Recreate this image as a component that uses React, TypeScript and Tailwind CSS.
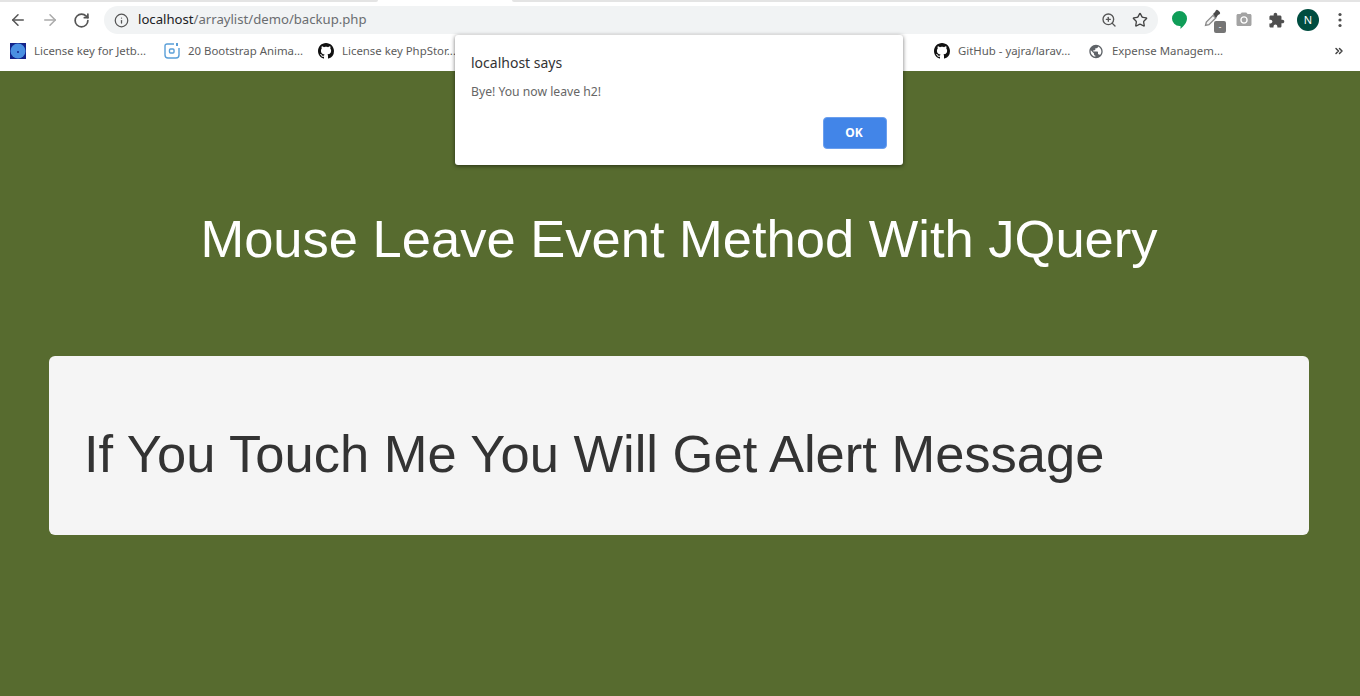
import type { ReactNode } from "react";
import { ArrowLeft, ArrowRight, RotateCw, Info, ZoomIn, Star, ChevronsRight } from "lucide-react";

const Github = () => (
  <svg viewBox="0 0 16 16" width="16" height="16" fill="#111">
    <path d="M8 0C3.58 0 0 3.58 0 8c0 3.54 2.29 6.53 5.47 7.59.4.07.55-.17.55-.38 0-.19-.01-.82-.01-1.49-2.01.37-2.53-.49-2.69-.94-.09-.23-.48-.94-.82-1.13-.28-.15-.68-.52-.01-.53.63-.01 1.08.58 1.23.82.72 1.21 1.87.87 2.33.66.07-.52.28-.87.51-1.07-1.78-.2-3.64-.89-3.64-3.95 0-.87.31-1.59.82-2.15-.08-.2-.36-1.02.08-2.12 0 0 .67-.21 2.2.82.64-.18 1.32-.27 2-.27s1.36.09 2 .27c1.53-1.04 2.2-.82 2.2-.82.44 1.1.16 1.92.08 2.12.51.56.82 1.27.82 2.15 0 3.07-1.87 3.75-3.65 3.95.29.25.54.73.54 1.48 0 1.07-.01 1.93-.01 2.2 0 .21.15.46.55.38A8.01 8.01 0 0 0 16 8c0-4.42-3.58-8-8-8z" />
  </svg>
);

const Jet = () => (
  <svg viewBox="0 0 16 16" width="16" height="16">
    <rect width="16" height="16" fill="#14248a" />
    <circle cx="8" cy="8" r="7.5" fill="#4a90e2" />
    <circle cx="8" cy="9" r="1" fill="#14248a" />
  </svg>
);

const Boot = () => (
  <svg viewBox="0 0 16 16" width="16" height="16" fill="none" stroke="#5a9fd8" strokeWidth="1.4">
    <path d="M10 1H3a2 2 0 0 0-2 2v9a3 3 0 0 0 3 3h8a3 3 0 0 0 3-3V5" />
    <rect x="5.500" y="6" width="4.500" height="4" rx="1" />
    <path d="M13 0v3" strokeWidth="2" />
  </svg>
);

const Globe = () => (
  <svg viewBox="0 0 24 24" width="17" height="17" fill="#5f6368">
    <path d="M12 2C6.48 2 2 6.48 2 12s4.48 10 10 10 10-4.48 10-10S17.52 2 12 2zm-1 17.930c-3.950-.49-7-3.850-7-7.930 0-.62.08-1.210.21-1.790L9 15v1c0 1.100.9 2 2 2v1.930zm6.900-2.540c-.26-.81-1-1.390-1.900-1.390h-1v-3c0-.55-.45-1-1-1H8v-2h2c.55 0 1-.45 1-1V7h2c1.100 0 2-.9 2-2v-.410c2.930 1.190 5 4.060 5 7.410 0 2.080-.8 3.970-2.100 5.390z" />
  </svg>
);

const Bubble = () => (
  <svg viewBox="0 0 15 18" width="15" height="18" className="shrink-0">
    <path d="M7.500 0a7.500 7.500 0 0 1 7.500 7.500c0 4.500-3.500 7.500-6.500 10.500v-3.050a7.500 7.500 0 0 1-1 .05A7.500 7.500 0 0 1 0 7.500 7.500 7.500 0 0 1 7.500 0z" fill="#0f9d58" />
  </svg>
);

const Dropper = () => (
  <span className="relative w-[20px] h-[26px] shrink-0 ml-[17px] -mt-[2px]">
    <svg viewBox="0 0 18 18" width="18" height="18" className="absolute left-0 top-[3px]">
      <path d="M1.500 16.500l.8-3.500 6.700-6.700 2.700 2.700-6.700 6.700z" fill="#f2f2f2" stroke="#8a8a8a" strokeWidth="1.300" />
      <path d="M9 5l2-2 .8-1.500a1.600 1.600 0 0 1 2.200-.2l1.800 1.800a1.600 1.600 0 0 1-.3 2.200L14 6l-2 3z" fill="#4a4a4a" />
    </svg>
    <span className="absolute left-[10px] top-[15px] w-[12px] h-[12px] rounded-[2px] bg-[#757575] text-white text-[8px] leading-[12px] text-center">-</span>
  </span>
);

const CameraIcon = () => (
  <svg viewBox="0 0 24 24" width="18" height="18" fill="#a3a3a3" className="shrink-0 ml-[11px]">
    <path d="M9 2 7.170 4H4c-1.100 0-2 .9-2 2v12c0 1.100.9 2 2 2h16c1.100 0 2-.9 2-2V6c0-1.100-.9-2-2-2h-3.170L15 2H9zm3 15c-2.760 0-5-2.240-5-5s2.240-5 5-5 5 2.240 5 5-2.240 5-5 5z" />
    <circle cx="12" cy="12" r="3.200" />
  </svg>
);

const PuzzleIcon = () => (
  <svg viewBox="0 0 24 24" width="17" height="17" fill="#4f4f4f" className="shrink-0 ml-[15px]">
    <path d="M20.500 11H19V7c0-1.100-.9-2-2-2h-4V3.500C13 2.120 11.880 1 10.500 1S8 2.120 8 3.500V5H4c-1.100 0-1.990.9-1.990 2v3.800H3.500c1.490 0 2.700 1.210 2.700 2.700s-1.210 2.700-2.700 2.700H2V20c0 1.100.9 2 2 2h3.800v-1.500c0-1.490 1.210-2.700 2.700-2.700 1.490 0 2.700 1.210 2.700 2.700V22H17c1.100 0 2-.9 2-2v-4h1.500c1.380 0 2.500-1.120 2.500-2.500S21.880 11 20.500 11z" />
  </svg>
);

const Kebab = () => (
  <svg viewBox="0 0 4 16" width="4" height="16" fill="#4f4f4f" className="shrink-0 ml-[19px]">
    <circle cx="2" cy="2.500" r="1.600" />
    <circle cx="2" cy="8" r="1.600" />
    <circle cx="2" cy="13.500" r="1.600" />
  </svg>
);

const Bookmark = ({ icon, label, w }: { icon: ReactNode; label: string; w: string }) => (
  <div className={`flex items-center gap-2 shrink-0 ${w}`}>
    <span className="shrink-0 w-4 h-4 flex items-center justify-center">{icon}</span>
    <span className="text-[11.4px] leading-none text-[#5c5c5c] whitespace-nowrap">{label}</span>
  </div>
);

export default function App() {
  return (
    <div className="relative w-[1360px] h-[696px] overflow-hidden bg-[#576b2f] font-['Liberation_Sans',Arial,sans-serif]">
      <header className="h-[71px] bg-white flex flex-col font-['Noto_Sans','Open_Sans',sans-serif]">
        <div className="h-[2px] flex justify-between shrink-0">
          <div className="w-[378px] bg-[#e4e4e4] rounded-br-lg" />
          <div className="w-[848px] bg-[#e4e4e4] rounded-bl-lg" />
        </div>
        <div className="h-[32px] mt-[2px] flex items-center shrink-0">
          <div className="flex items-center pl-[9px] gap-[15px] w-[104px] shrink-0">
            <ArrowLeft size={18} color="#555" strokeWidth={2} />
            <ArrowRight size={18} color="#aaa" strokeWidth={2} className="-ml-[1px]" />
            <RotateCw size={17} color="#555" strokeWidth={2.4} className="-ml-[1px]" />
          </div>
          <div className="w-[1054px] h-[28px] rounded-full bg-[#f1f3f4] flex items-center pl-[10px] pr-[10px] shrink-0">
            <Info size={15} color="#555" strokeWidth={2} />
            <span className="ml-[9px] text-[13.15px] leading-none text-[#202124] whitespace-nowrap">
              localhost<span className="text-[#6a6d70]">/arraylist/demo/backup.php</span>
            </span>
            <div className="ml-auto flex items-center gap-[15px]">
              <ZoomIn size={16} color="#555" strokeWidth={2} />
              <Star size={16} color="#444" strokeWidth={2} />
            </div>
          </div>
          <div className="flex-1 flex items-center pl-[14px]">
            <Bubble />
            <Dropper />
            <CameraIcon />
            <PuzzleIcon />
            <span className="w-[22px] h-[22px] shrink-0 rounded-full bg-[#004d40] text-white text-[11px] leading-[22px] text-center ml-[12px]">N</span>
            <Kebab />
          </div>
        </div>
        <div className="flex-1 flex items-center pl-[10px] pb-[5px]">
          <Bookmark w="w-[154px]" icon={<Jet />} label="License key for Jetb..." />
          <Bookmark w="w-[154px]" icon={<Boot />} label="20 Bootstrap Anima..." />
          <Bookmark w="w-[616px]" icon={<Github />} label="License key PhpStor..." />
          <Bookmark w="w-[154px]" icon={<Github />} label="GitHub - yajra/larav..." />
          <Bookmark w="w-[245px]" icon={<Globe />} label="Expense Managem..." />
          <ChevronsRight size={12} color="#444" strokeWidth={3} />
        </div>
      </header>

      <main className="flex flex-col items-center">
        <h2 className="mt-[134px] mr-[2px] h-[68px] text-[52.5px] leading-[68px] font-normal text-white whitespace-nowrap">
          Mouse Leave Event Method With JQuery
        </h2>
        <section className="mt-[83px] mr-[2px] w-[1260px] h-[179px] rounded-md bg-[#f5f5f5] flex items-center pl-[35px] pt-[17px]">
          <p className="text-[52.5px] leading-[68px] text-[#333] whitespace-nowrap">
            If You Touch Me You Will Get Alert Message
          </p>
        </section>
      </main>

      <div className="absolute left-[455px] top-[35px] w-[448px] h-[130px] bg-white rounded-[3px] shadow-[0_1px_4px_rgba(0,0,0,0.55)] pl-[16px] pr-[16px] pt-[18px] font-['Noto_Sans','Open_Sans',sans-serif]">
        <p className="text-[14px] leading-[20px] text-[#333]">localhost says</p>
        <p className="mt-[10px] text-[12.2px] leading-[18px] text-[#666]">Bye! You now leave h2!</p>
        <div className="absolute right-[16px] bottom-[16px] w-[64px] h-[32px] rounded-[4px] bg-[#4285e8] border border-[#6b9fee] pr-[2px] text-white text-[12px] font-bold leading-[30px] text-center">OK</div>
      </div>
    </div>
  );
}
